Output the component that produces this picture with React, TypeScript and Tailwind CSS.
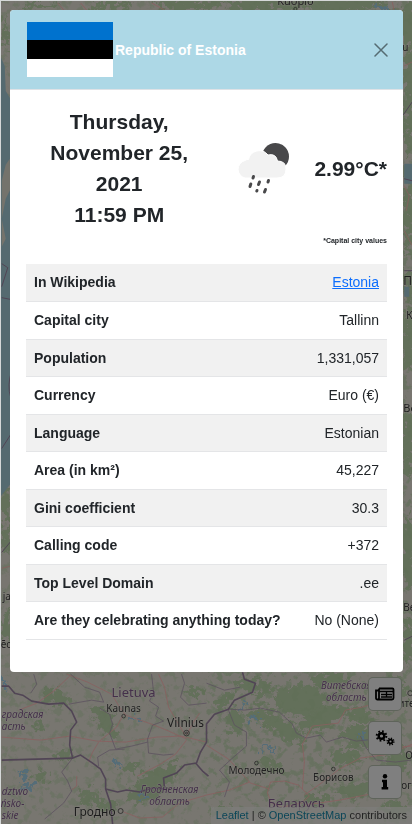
import React from "react";

type Pt = { d: string };

const forests: [number, number, number, number, number][] = [
  [55, 697, 14, 7, 20], [62, 755, 11, 5, -10], [106, 722, 8, 16, -20], [98, 714, 8, 6, 0], [150, 785, 28, 12, -35], [128, 768, 10, 4, -30],
  [170, 770, 10, 5, -20], [38, 727, 6, 4, 0], [88, 797, 10, 8, 10], [40, 777, 8, 5, 0], [105, 806, 10, 5, 0], [255, 686, 20, 7, 10], [300, 700, 26, 16, 0],
  [322, 718, 24, 10, -20], [262, 715, 14, 8, 20], [285, 730, 22, 9, 30], [365, 736, 24, 11, 0], [345, 758, 16, 8, 0], [225, 700, 12, 5, -30],
  [360, 715, 14, 7, 0], [270, 765, 14, 6, 20], [235, 720, 8, 14, 0], [330, 680, 18, 8, 0], [398, 760, 12, 12, 0], [195, 690, 9, 4, 0],
  [315, 800, 14, 6, 0], [355, 790, 18, 8, 0], [392, 690, 16, 12, 0], [395, 810, 14, 8, 0], [222, 812, 12, 5, 0],
  [408, 25, 8, 26, 0], [409, 75, 6, 26, 0], [409, 120, 6, 34, 0], [409, 215, 6, 42, 0], [408, 285, 6, 15, 0], [408, 340, 7, 34, 0], [408, 445, 7, 32, 0], [408, 550, 7, 38, 0], [408, 640, 6, 24, 0],
  [5, 505, 7, 15, 0], [6, 540, 5, 12, 0], [7, 625, 6, 14, 0], [190, 3, 34, 6, 0], [260, 3, 34, 7, 0], [340, 3, 50, 7, 0], [40, 4, 18, 3, 0], [4, 32, 3, 16, 0], [110, 4, 20, 4, 0],
];

const borders: Pt[] = [
  { d: "M1 686 L8 686 L14 693 L22 695 L31 701 L48 704 L63 703 L71 711 L76 722 L70 730 L69 745 L72 758 L80 755 L92 763 L100 769 L105 779 L105 789 L110 804 L112 824" },
  { d: "M105 789 L117 792 L126 790 L139 792 L152 788 L164 789 L163 778 L176 773 L184 765 L196 763 L200 752 L206 742 L206 724 L214 714 L228 709 L234 700 L252 692 L255 683 L244 679 L242 672" },
  { d: "M1 760 L72 758" },
  { d: "M195 763 L202 771 L208 776" },
];

const districts: Pt[] = [
  { d: "M33 674 L36 684 L30 693" }, { d: "M70 674 L84 687 L99 692 L103 702 L91 700 L68 704" },
  { d: "M151 674 L153 692 L149 701 L158 707 L155 716 L163 721 L152 725 L147 739 L148 753 L163 755 L173 754" },
  { d: "M99 708 L109 714 L112 724 L109 733 L115 749 L131 746 L147 742" },
  { d: "M181 674 L184 683 L180 697 L188 705 L206 703" },
  { d: "M98 766 L97 757 L109 750 L124 749" }, { d: "M72 758 L61 772 L67 781 L71 791 L63 803 L44 819" },
  { d: "M228 709 L244 710 L260 708 L279 712 L292 724 L296 733 L306 738 L320 735 L326 742 L342 737 L356 741 L374 739" },
  { d: "M228 710 L234 725 L246 732 L246 746 L232 758 L219 770 L229 782 L224 797" },
  { d: "M206 683 L224 690 L240 687" }, { d: "M360 736 L366 748 L376 760 L395 762 L411 760" },
];

const roads: Pt[] = [
  { d: "M66 674 L87 682 L111 694 L119 707 L125 715 L151 724 L166 730 L186 739" },
  { d: "M158 674 L164 687 L168 707 L178 724 L184 734" }, { d: "M122 716 L116 727 L99 741" },
  { d: "M69 676 L53 691 L36 703 L18 710" },
  { d: "M1 737 L40 740 L69 736 L96 741 L125 742 L156 737 L181 736 L206 742" },
  { d: "M186 735 L193 722 L199 713 M186 740 L175 754 L160 764 L137 776" },
  { d: "M98 742 L92 752 L88 762" }, { d: "M76 776 L76 786 L71 790" }, { d: "M123 812 L139 818 L162 817 L179 803 L206 795" },
  { d: "M206 745 L228 759 L250 783 L269 789" },
  { d: "M412 744 L390 754 L360 758 L339 769 L321 783 L304 795" },
  { d: "M302 789 L304 762 L302 744 L312 726 L338 723 L345 710 L362 707 L382 701" },
  { d: "M206 795 L229 790 L249 782" },
  { d: "M270 782 L284 781 L298 785 L309 796 L301 803 L282 807 L271 803 L267 793 Z" },
  { d: "M304 805 L340 800 L370 794" }, { d: "M380 750 L398 747 L412 746" },
  { d: "M57 2 L64 10 M80 2 L86 9 M151 2 L164 9 M392 1 L394 10" },
  { d: "M404 65 L412 61 M404 185 L409 195 L406 210 M404 230 L412 245 M1 568 L9 566" },
];

interface Label { x: number; y: number; size: number; text: string; anchor: "start" | "middle"; cls: string }
const labels: Label[] = [
  { x: 295, y: 4, size: 11, text: "Kuopio", anchor: "middle", cls: "fill-[#222222]" },
  { x: 133, y: 697, size: 13, text: "Lietuva", anchor: "middle", cls: "fill-[#44304a]" },
  { x: 123, y: 712, size: 10, text: "Kaunas", anchor: "middle", cls: "fill-[#222222]" },
  { x: 185, y: 727, size: 12, text: "Vilnius", anchor: "middle", cls: "fill-[#1d1d1d]" },
  { x: 1, y: 718, size: 10, text: "градская", anchor: "start", cls: "italic fill-[#44304a]" },
  { x: 1, y: 730, size: 10, text: "асть", anchor: "start", cls: "italic fill-[#44304a]" },
  { x: 1, y: 795, size: 10, text: "dztwo", anchor: "start", cls: "italic fill-[#44304a]" },
  { x: 0, y: 807, size: 10, text: "ńsko-", anchor: "start", cls: "italic fill-[#44304a]" },
  { x: 1, y: 819, size: 10, text: "skie", anchor: "start", cls: "italic fill-[#44304a]" },
  { x: 169, y: 793, size: 10, text: "Гродненская", anchor: "middle", cls: "italic fill-[#44304a]" },
  { x: 169, y: 805, size: 10, text: "область", anchor: "middle", cls: "italic fill-[#44304a]" },
  { x: 94, y: 816, size: 12, text: "Гродно", anchor: "middle", cls: "fill-[#1d1d1d]" },
  { x: 346, y: 689, size: 10, text: "Витебская", anchor: "middle", cls: "italic fill-[#44304a]" },
  { x: 346, y: 701, size: 10, text: "область", anchor: "middle", cls: "italic fill-[#44304a]" },
  { x: 256, y: 774, size: 10, text: "Молодечно", anchor: "middle", cls: "fill-[#222222]" },
  { x: 333, y: 781, size: 10, text: "Борисов", anchor: "middle", cls: "fill-[#222222]" },
  { x: 296, y: 808, size: 13, text: "Беларусь", anchor: "middle", cls: "fill-[#44304a]" },
  { x: 398, y: 707, size: 10, text: "ите", anchor: "start", cls: "fill-[#222222]" },
  { x: 405, y: 759, size: 10, text: "Ор", anchor: "start", cls: "fill-[#222222]" },
  { x: 401, y: 789, size: 10, text: "ог", anchor: "start", cls: "fill-[#222222]" },
  { x: 402, y: 50, size: 10, text: "u", anchor: "start", cls: "fill-[#222222]" },
  { x: 403, y: 284, size: 12, text: "П", anchor: "start", cls: "fill-[#1d1d1d]" },
  { x: 406, y: 318, size: 10, text: "К", anchor: "start", cls: "fill-[#222222]" },
  { x: 403, y: 411, size: 11, text: "Ве", anchor: "start", cls: "fill-[#1d1d1d]" },
  { x: 403, y: 611, size: 10, text: "Ве", anchor: "start", cls: "fill-[#222222]" },
  { x: 2, y: 600, size: 10, text: "ja", anchor: "start", cls: "fill-[#222222]" },
  { x: 0, y: 648, size: 10, text: "ēc", anchor: "start", cls: "fill-[#222222]" },
];

function MapCanvas() {
  return (
    <svg className="absolute inset-0 h-full w-full font-['Noto_Sans',sans-serif]" viewBox="0 0 412 824" preserveAspectRatio="xMidYMid slice" aria-hidden="true">
      <defs>
        <filter id="woods" x="0" y="0" width="100%" height="100%" colorInterpolationFilters="sRGB">
          <feTurbulence type="fractalNoise" baseFrequency="0.13" numOctaves="4" seed="7" />
          <feColorMatrix values="0 0 0 0 0.38  0 0 0 0 0.44  0 0 0 0 0.35  7 0 0 0 -3.7" />
        </filter>
        <filter id="ragged" x="-20%" y="-20%" width="140%" height="140%" colorInterpolationFilters="sRGB">
          <feTurbulence type="fractalNoise" baseFrequency="0.16" numOctaves="3" seed="3" />
          <feDisplacementMap in="SourceGraphic" scale="22" xChannelSelector="R" yChannelSelector="G" />
        </filter>
      </defs>
      <rect width="412" height="824" fill="#787670" />
      <rect width="412" height="824" filter="url(#woods)" opacity="0.45" />
      <rect x="206" width="206" height="824" filter="url(#woods)" opacity="0.4" />
      <g filter="url(#ragged)" fill="#606f57" opacity="0.85">
        {forests.map(([x, y, rx, ry, a], i) => (
          <ellipse key={i} cx={x} cy={y} rx={rx} ry={ry} transform={`rotate(${a} ${x} ${y})`} />
        ))}
      </g>
      <path d="M0 56 L4 65 L5 90 L11 100 L11 482 L0 496 Z" fill="#556a70" />
      <path d="M404 163 h8 v20 h-8 z M404 286 h5 v10 h-5 z" fill="#556a70" />
      <path d="M5 164 l4 -6 1 30 -5 10 -4 20 4 20 -4 8 V180 z" fill="#74736c" />
      <g filter="url(#ragged)" fill="#556d78">
        <ellipse cx="22" cy="776" rx="4" ry="7" />
        <ellipse cx="28" cy="789" rx="5" ry="3" />
        <ellipse cx="133" cy="719" rx="6" ry="2" />
        <ellipse cx="115" cy="763" rx="3" ry="3" />
        <ellipse cx="3" cy="684" rx="3" ry="6" />
        <ellipse cx="254" cy="719" rx="6" ry="4" />
        <ellipse cx="243" cy="704" rx="4" ry="2" />
        <ellipse cx="269" cy="748" rx="9" ry="2" />
        <ellipse cx="362" cy="736" rx="2" ry="4" />
        <ellipse cx="141" cy="796" rx="2" ry="4" />
        <ellipse cx="382" cy="6" rx="8" ry="2" />
      </g>
      <g fill="none" stroke="#8a5f60" strokeWidth="0.8">{roads.map((r) => <path key={r.d} d={r.d} />)}</g>
      <g fill="none" stroke="#5d535f" strokeWidth="0.8">{districts.map((r) => <path key={r.d} d={r.d} />)}</g>
      <g fill="none" stroke="#514555" strokeWidth="1.6" strokeLinejoin="round">{borders.map((r) => <path key={r.d} d={r.d} />)}</g>
      <g fill="none" stroke="#514555" strokeWidth="1">
        <path d="M1 263 L7 267 L1 286 M1 297 L11 299 M11 370 Q6 385 10 397 M10 434 L1 448 M412 101 L403 114 M404 178 L412 180 M404 270 h8 M11 540 L1 552 M404 640 L412 636" />
      </g>
      <g fill="none" stroke="#282828" strokeWidth="0.8">
        <circle cx="123" cy="716" r="1.8" />
        <circle cx="186" cy="733" r="2.8" />
        <circle cx="186" cy="733" r="1" />
        <circle cx="120" cy="811" r="2.5" />
        <circle cx="256" cy="763" r="1.8" />
        <circle cx="333" cy="769" r="1.8" />
        <circle cx="410" cy="693" r="2.5" />
        <circle cx="295" cy="8" r="1.6" />
      </g>
      {labels.map((l) => (
        <text key={`${l.x}-${l.y}`} x={l.x} y={l.y} fontSize={l.size} textAnchor={l.anchor} className={l.cls} stroke="#807e79" strokeWidth="1.2" strokeOpacity="0.6" paintOrder="stroke">
          {l.text}
        </text>
      ))}
    </svg>
  );
}

function NewsIcon() {
  return (
    <svg viewBox="0 0 20 14" className="h-[14px] w-5" fill="none" stroke="#000" aria-hidden="true">
      <path d="M4 1.5 H17.5 Q18.5 1.5 18.5 2.5 V11 Q18.5 12.5 17 12.5 H2.5 Q1 12.5 1 11 V3.5 H4 M4 1.5 V11 Q4 12.5 2.5 12.5" strokeWidth="1.8" />
      <path d="M4 4.5 H18 M6 7.5 H17 M6 10 H17 M11.5 4.5 V10" strokeWidth="1.3" />
    </svg>
  );
}

function GearsIcon() {
  return (
    <svg viewBox="0 0 20 16" className="h-4 w-5" fill="none" stroke="#000" aria-hidden="true">
      <circle cx="6.5" cy="6" r="2.8" strokeWidth="2.4" />
      <circle cx="6.5" cy="6" r="4.8" strokeWidth="2" strokeDasharray="1.7 2.07" />
      <circle cx="15.5" cy="11.5" r="1.9" strokeWidth="1.7" />
      <circle cx="15.5" cy="11.5" r="3.3" strokeWidth="1.5" strokeDasharray="1.2 1.39" />
    </svg>
  );
}

function InfoIcon() {
  return (
    <svg viewBox="0 0 8 16" className="h-4 w-2" fill="#000" aria-hidden="true">
      <circle cx="4" cy="2.2" r="2.2" />
      <path d="M1 5.8 H6 V13 H7.2 V15.6 H0.6 V13 H2 V8.2 H1 Z" />
    </svg>
  );
}

const mapButtons = [
  { label: "News", icon: <NewsIcon /> },
  { label: "Settings", icon: <GearsIcon /> },
  { label: "Country info", icon: <InfoIcon /> },
];

function WeatherIcon() {
  return (
    <svg viewBox="0 0 54 54" className="h-[54px] w-[54px] shrink-0" role="img" aria-label="Rain showers at night">
      <circle cx="39.500" cy="15.500" r="13.500" fill="#48484a" />
      <path d="M9 37 A9 9 0 0 1 9 19.500 Q11 18 12.500 18.500 A11 11 0 0 1 32 14 Q40 12 41.500 20 Q50 20 50 28 Q50 37 41 37 Z" fill="#f2f2f2" stroke="#fff" strokeWidth="1" />
      <g stroke="#48484a" strokeWidth="3" strokeLinecap="round">
        <path d="M17.500 35.500 L17 37 M14.800 43 L14 45.500 M23.500 41 L22.500 43.500 M21 49.500 L20.800 50 M32.500 39.500 L32 41 M29.500 48.500 L28.500 51" />
      </g>
    </svg>
  );
}

const facts: { name: string; value: string; href?: string }[] = [
  { name: "In Wikipedia", value: "Estonia", href: "#estonia" },
  { name: "Capital city", value: "Tallinn" },
  { name: "Population", value: "1,331,057" },
  { name: "Currency", value: "Euro (€)" },
  { name: "Language", value: "Estonian" },
  { name: "Area (in km²)", value: "45,227" },
  { name: "Gini coefficient", value: "30.3" },
  { name: "Calling code", value: "+372" },
  { name: "Top Level Domain", value: ".ee" },
  { name: "Are they celebrating anything today?", value: "No (None)" },
];

function CountryDialog() {
  return (
    <section role="dialog" aria-labelledby="country-name" className="relative mx-auto max-w-[500px] overflow-hidden rounded bg-white">
      <header className="flex items-center border-b border-[#dee2e6] bg-[#add8e6] py-3 pr-[14px] pl-[17px]">
        <div role="img" aria-label="Flag of Estonia" className="grid h-[55px] w-[86px] grid-rows-3">
          <div className="bg-[#0072ce]" />
          <div className="bg-black" />
          <div className="bg-white" />
        </div>
        <h1 id="country-name" className="ml-0.5 flex-1 text-[14px] leading-5 font-bold text-white">Republic of Estonia</h1>
        <button type="button" aria-label="Close" className="flex h-4 w-4 items-center justify-center">
          <svg viewBox="0 0 14 14" className="h-[14px] w-[14px]" stroke="#566c73" strokeWidth="1.5" strokeLinecap="round" aria-hidden="true">
            <path d="M1 1 L13 13 M13 1 L1 13" />
          </svg>
        </button>
      </header>
      <div className="px-4 pt-4 pb-8">
        <div className="flex items-center">
          <p className="flex-1 pr-6 text-center text-[21px] leading-[31px] font-bold">
            Thursday,
            <br />
            November 25,
            <br />
            2021
            <br />
            11:59 PM
          </p>
          <div className="flex items-center gap-6">
            <WeatherIcon />
            <p className="text-[21px] leading-[31px] font-bold">2.99°C*</p>
          </div>
        </div>
        <p className="mt-1 pb-4 text-right text-[7px] leading-[14px] font-bold">*Capital city values</p>
        <table className="w-full border-collapse text-[14px] leading-5">
          <tbody>
            {facts.map((f) => (
              <tr key={f.name} className="h-[37px] border-b border-[#e4e5e7] odd:bg-[#f1f1f1] even:h-[38px]">
                <th scope="row" className="px-2 text-left font-bold">{f.name}</th>
                <td className="px-2 text-right">
                  {f.href ? <a href={f.href} className="text-[#0d6efd] underline">{f.value}</a> : f.value}
                </td>
              </tr>
            ))}
          </tbody>
        </table>
      </div>
    </section>
  );
}

export default function App() {
  return (
    <div className="relative min-h-screen overflow-hidden border-t border-l border-[#d5d8d8] font-['Liberation_Sans',Arial,sans-serif] text-[#212529]">
      <MapCanvas />
      <div className="relative flex flex-col pt-[9px]">
        <div className="px-[9px]">
          <CountryDialog />
        </div>
        <nav aria-label="Map tools" className="mt-[6px] flex flex-col items-end gap-3 pr-[11px]">
          {mapButtons.map((b) => (
            <button key={b.label} type="button" aria-label={b.label} className="flex h-8 w-8 items-center justify-center rounded-sm bg-[#7f7f7f] ring-1 ring-[#5f645b]">
              {b.icon}
            </button>
          ))}
        </nav>
      </div>
      <footer className="absolute right-0 bottom-0 bg-[#7d7d7b]/75 px-[5px] text-[11px] leading-[17px] text-[#222222]">
        <a href="#leaflet" className="text-[#0b4658]">Leaflet</a> | © <a href="#openstreetmap" className="text-[#0b4658]">OpenStreetMap</a> contributors
      </footer>
    </div>
  );
}
